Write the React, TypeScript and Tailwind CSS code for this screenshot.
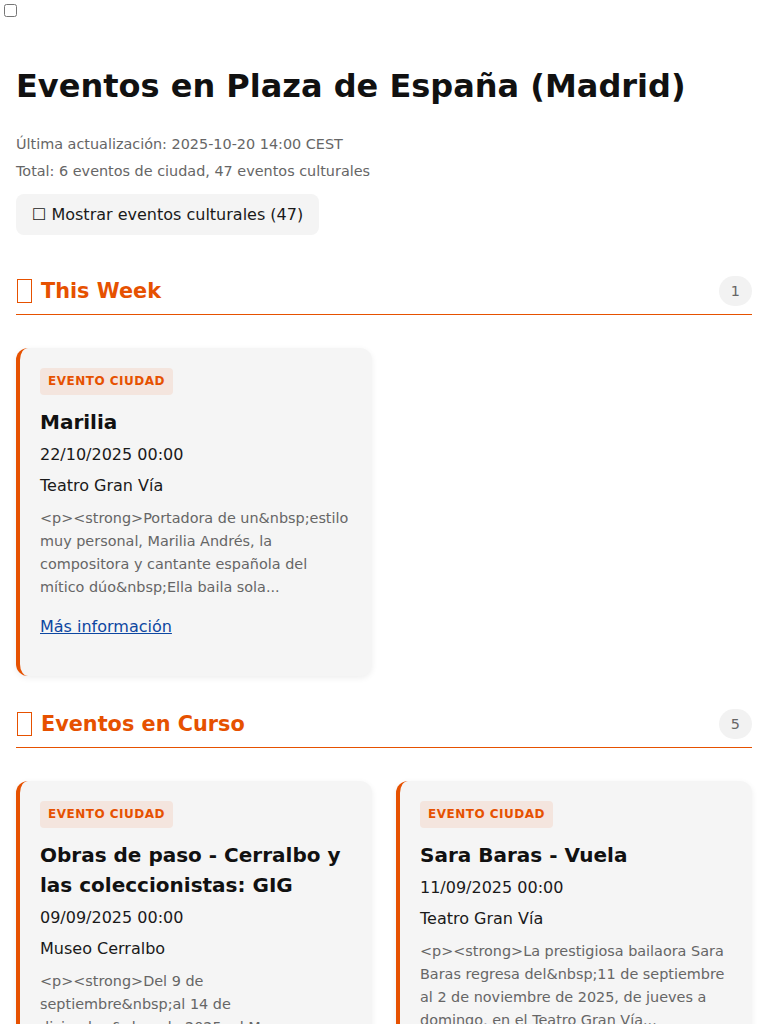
import React from "react";

type Ev = {
  title: string;
  date: string;
  place: string;
  desc: string;
};

const thisWeek: Ev[] = [
  {
    title: "Marilia",
    date: "22/10/2025 00:00",
    place: "Teatro Gran Vía",
    desc: "<p><strong>Portadora de un&nbsp;estilo muy personal, Marilia Andrés, la compositora y cantante española del mítico dúo&nbsp;Ella baila sola...",
  },
];

const enCurso: Ev[] = [
  {
    title: "Obras de paso - Cerralbo y las coleccionistas: GIG",
    date: "09/09/2025 00:00",
    place: "Museo Cerralbo",
    desc: "<p><strong>Del 9 de septiembre&nbsp;al 14 de diciembre&nbsp;de 2025, el Museo Cerralbo acoge la intervención...",
  },
  {
    title: "Sara Baras - Vuela",
    date: "11/09/2025 00:00",
    place: "Teatro Gran Vía",
    desc: "<p><strong>La prestigiosa bailaora Sara Baras regresa del&nbsp;11 de septiembre al 2 de noviembre de 2025, de jueves a domingo, en el Teatro Gran Vía...",
  },
  {
    title: "Exposición temporal en el Templo de Debod",
    date: "15/09/2025 00:00",
    place: "Templo de Debod",
    desc: "<p><strong>Una muestra que recorre la historia del templo egipcio y su traslado a Madrid...",
  },
  {
    title: "Teatro en el Parque del Oeste",
    date: "01/10/2025 00:00",
    place: "Parque del Oeste",
    desc: "<p><strong>Programación de artes escénicas al aire libre durante todo el mes de octubre...",
  },
  {
    title: "Visitas guiadas: Plaza de España",
    date: "05/10/2025 00:00",
    place: "Plaza de España",
    desc: "<p><strong>Recorridos guiados por la renovada Plaza de España y su entorno histórico...",
  },
];

function Card({ ev }: { ev: Ev }) {
  return (
    <div className="rounded-xl border-l-4 border-[#e65100] bg-[#f5f5f5] px-5 pt-5 pb-[37px] shadow-[0_2px_6px_rgba(0,0,0,0.07)]">
      <div className="flex">
        <span className="rounded bg-[#f4e5de] px-2 text-xs font-bold uppercase leading-[27px] tracking-[0.5px] text-[#e65100]">
          Evento ciudad
        </span>
      </div>
      <h3 className="mt-3 text-xl font-bold leading-[30px] text-[#111]">{ev.title}</h3>
      <p className="mt-1.5 text-base leading-6 text-[#1a1a1a]">{ev.date}</p>
      <p className="mt-[7px] text-base leading-6 text-[#1a1a1a]">{ev.place}</p>
      <p className="mt-[9px] text-[14.4px] leading-[23px] text-[#666]">{ev.desc}</p>
      <div className="mt-4 text-base leading-6">
        <a href="#" className="text-[#0d47a1] underline">
          Más información
        </a>
      </div>
    </div>
  );
}

function Section({
  title,
  count,
  events,
  className,
}: {
  title: string;
  count: number;
  events: Ev[];
  className: string;
}) {
  return (
    <section className={className}>
      <div className="flex items-center justify-between border-b border-[#e65100] pb-2">
        <h2 className="flex items-center text-[20.8px] font-bold leading-[30px] text-[#e65100]">
          <span
            aria-hidden="true"
            className="ml-px mr-[9px] inline-block h-[24px] w-[15px] border-[1.5px] border-[#e65100]"
          />
          {title}
        </h2>
        <span className="rounded-full bg-[#f2f2f2] px-3 py-1 text-[14.4px] leading-[22px] text-[#666]">
          {count}
        </span>
      </div>
      <div className="mt-[33px] grid grid-cols-2 gap-6">
        {events.map((ev) => (
          <Card key={ev.title} ev={ev} />
        ))}
      </div>
    </section>
  );
}

export default function App() {
  return (
    <div className="min-h-screen bg-white font-['DejaVu_Sans',sans-serif] text-[#1a1a1a]">
      <input type="checkbox" className="ml-1 mt-1 block h-[13px] w-[13px]" />
      <div className="px-4 pb-10">
        <h1 className="mt-[50px] text-[32px] font-bold leading-[38px] text-[#111]">
          Eventos en Plaza de España (Madrid)
        </h1>
        <p className="mt-[29px] text-[14.4px] leading-[21px] text-[#666]">
          Última actualización: 2025-10-20 14:00 CEST
        </p>
        <p className="mt-[6px] text-[14.4px] leading-[21px] text-[#666]">
          Total: 6 eventos de ciudad, 47 eventos culturales
        </p>
        <button className="mt-3 flex h-[41px] items-center rounded-lg bg-[#f4f4f4] px-4 text-base text-[#1a1a1a]">
          ☐ Mostrar eventos culturales (47)
        </button>
        <Section className="mt-[41px]" title="This Week" count={1} events={thisWeek} />
        <Section className="mt-[33px]" title="Eventos en Curso" count={5} events={enCurso} />
      </div>
    </div>
  );
}
